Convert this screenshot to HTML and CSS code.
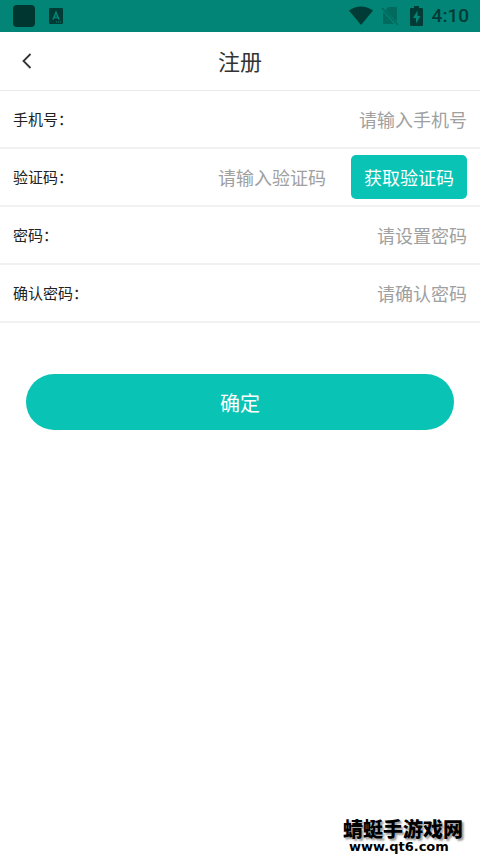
FILE: index.html
```html
<!DOCTYPE html>
<html lang="zh-CN">
<head>
<meta charset="utf-8">
<meta name="viewport" content="width=device-width, initial-scale=1">
<title>注册</title>
<link rel="stylesheet" href="styles.css">
</head>
<body>
<div class="status">
  <div class="status-group status-left">
    <span class="app-dot"></span>
    <svg width="14" height="16" viewBox="0 0 14 16" aria-hidden="true">
      <rect width="14" height="16" rx="1" fill="#003c35"/>
      <path d="M4 11.500 7 4.500 10 11.500M5 9.500h4" fill="none" stroke="#028576" stroke-width="1.600"/>
      <path d="M7 14h6" stroke="#028576" stroke-width="1" stroke-dasharray="1 1"/>
    </svg>
  </div>
  <div class="status-group status-right">
    <svg width="24" height="20" viewBox="0 0 24 20" aria-hidden="true">
      <path d="M0 4.500Q12-3.500 24 4.500L12 19Z" fill="#003c35"/>
    </svg>
    <svg class="sim" width="18" height="20" viewBox="0 0 18 20" aria-hidden="true">
      <path d="M7 1h8q1 0 1 1v14L4.500 4ZM2 5.500 13 18H3q-1 0-1-1Z" fill="#026a5e"/>
      <path d="M1 2 17 19" stroke="#026a5e" stroke-width="1.500"/>
    </svg>
    <svg class="battery" width="13" height="20" viewBox="0 0 13 20" aria-hidden="true">
      <path d="M4 0h5v2h3q1 0 1 1v16q0 1-1 1H1q-1 0-1-1V3q0-1 1-1h3Z" fill="#003c35"/>
      <path d="M7.500 4.500 3 12h3v5.500L10.500 10H7.500Z" fill="#028576"/>
    </svg>
    <span class="clock">4:10</span>
  </div>
</div>
<header class="header">
  <button class="back" type="button" aria-label="返回">
    <svg width="10" height="16" viewBox="0 0 10 16" aria-hidden="true">
      <path d="M8.500 1 1.500 8l7 7" fill="none" stroke="#333" stroke-width="1.800"/>
    </svg>
  </button>
  <h1 class="title">注册</h1>
</header>
<form class="form">
  <div class="row">
    <label for="phone">手机号：</label>
    <input id="phone" type="tel" placeholder="请输入手机号">
  </div>
  <div class="row">
    <label for="code">验证码：</label>
    <input id="code" type="text" placeholder="请输入验证码">
    <button class="get-code" type="button">获取验证码</button>
  </div>
  <div class="row">
    <label for="password">密码：</label>
    <input id="password" type="password" placeholder="请设置密码">
  </div>
  <div class="row">
    <label for="confirm">确认密码：</label>
    <input id="confirm" type="password" placeholder="请确认密码">
  </div>
  <button class="submit" type="submit">确定</button>
</form>
<footer class="mark">
  <span class="mark-name">蜻蜓手游戏网</span>
  <span class="mark-site">www.qt6.com</span>
</footer>
</body>
</html>
```
FILE: styles.css
```css
* {
  box-sizing: border-box;
}

body {
  display: flex;
  flex-direction: column;
  min-height: 100vh;
  margin: 0;
  background: #fff;
  color: #222;
  font-family: "Noto Sans CJK SC", sans-serif;
}

button,
input {
  font-family: inherit;
  border: 0;
  padding: 0;
}

.status {
  display: flex;
  justify-content: space-between;
  height: 32px;
  padding: 0 11px 0 13px;
  background: #028576;
}

.status-group {
  display: flex;
  align-items: center;
}

.status-left {
  gap: 14px;
}

.app-dot {
  width: 22px;
  height: 22px;
  border-radius: 4px;
  background: #003630;
}

.sim {
  margin-left: 8px;
}

.battery {
  margin: 0 9px 0 11px;
}

.clock {
  color: #003c35;
  font: 500 19px/32px Roboto, sans-serif;
}

.header {
  display: grid;
  grid-template-columns: 40px 1fr 40px;
  align-items: center;
  height: 59px;
  border-bottom: 1px solid #ebebeb;
}

.back {
  display: flex;
  align-items: center;
  justify-content: flex-end;
  height: 100%;
  padding-right: 8px;
  background: none;
}

.title {
  margin: 0;
  padding-bottom: 2px;
  color: #333;
  font-size: 22px;
  font-weight: 400;
  line-height: 32px;
  text-align: center;
}

.form {
  display: flex;
  flex-direction: column;
}

.row {
  display: flex;
  align-items: center;
  height: 58px;
  padding: 0 13px;
  border-bottom: 2px solid #f1f1f1;
}

.row label {
  font-size: 15px;
  line-height: 24px;
}

.row input {
  flex: 1;
  min-width: 0;
  height: 44px;
  background: none;
  color: #222;
  font-size: 18px;
  text-align: right;
}

.row input::placeholder {
  color: #a0a0a0;
  opacity: 1;
}

.get-code {
  height: 44px;
  margin-left: 25px;
  padding: 0 13px;
  border-radius: 5px;
  background: #09c3b5;
  color: #fff;
  font-size: 18px;
}

.submit {
  height: 56px;
  margin: 51px 26px 0;
  border-radius: 28px;
  background: #09c3b5;
  color: #fff;
  font-size: 20px;
}

.mark {
  display: flex;
  flex-direction: column;
  align-items: flex-start;
  margin: auto 0 0 auto;
  padding-right: 17px;
  color: #000;
}

.mark-name {
  font-size: 20px;
  font-weight: 900;
  line-height: 22px;
  text-shadow: 2px 2px 2px #999;
}

.mark-site {
  padding-left: 6px;
  font: 700 13px/14px "DejaVu Sans", sans-serif;
}
```
